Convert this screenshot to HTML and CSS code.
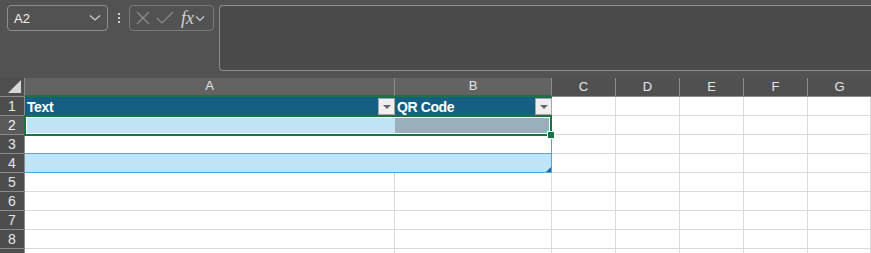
FILE: index.html
```html
<!DOCTYPE html>
<html lang="en">
<head>
    <meta charset="UTF-8">
    <title>Sheet</title>
    <link rel="stylesheet" href="styles.css">
</head>
<body>
    <div class="toolbar">
        <div class="namebox">
            <span>A2</span>
            <svg width="12" height="8" viewBox="0 0 12 8"><path d="M1 1.5 L6 6 L11 1.5" fill="none" stroke="#cfcfcf" stroke-width="1.2"/></svg>
        </div>
        <div class="grip"><i></i><i></i><i></i></div>
        <div class="controls">
            <svg width="16" height="16" viewBox="0 0 16 16"><path d="M2 2 L14 14 M14 2 L2 14" stroke="#8c8c8c" stroke-width="1.2"/></svg>
            <svg width="18" height="16" viewBox="0 0 18 16"><path d="M1 8 L6 13 L17 2" fill="none" stroke="#8c8c8c" stroke-width="1.2"/></svg>
            <span class="fx">fx</span>
            <svg width="10" height="7" viewBox="0 0 10 7"><path d="M1 1.5 L5 5.5 L9 1.5" fill="none" stroke="#cfcfcf" stroke-width="1.1"/></svg>
        </div>
        <div class="formula"></div>
    </div>

    <div class="sheet">
        <div class="corner"><svg width="13" height="13" viewBox="0 0 13 13"><path d="M13 0 L13 13 L0 13 Z" fill="#d6d6d6"/></svg></div>
        <div class="colhead sel">A</div>
        <div class="colhead sel">B</div>
        <div class="colhead">C</div>
        <div class="colhead">D</div>
        <div class="colhead">E</div>
        <div class="colhead">F</div>
        <div class="colhead last">G</div>

        <div class="rowhead">1</div>
        <div class="cell th">Text<span class="filter"></span></div>
        <div class="cell th">QR Code<span class="filter"></span></div>
        <div class="cell"></div><div class="cell"></div><div class="cell"></div><div class="cell"></div><div class="cell"></div>

        <div class="rowhead sel">2</div>
        <div class="cell band"></div>
        <div class="cell picked"></div>
        <div class="cell"></div><div class="cell"></div><div class="cell"></div><div class="cell"></div><div class="cell"></div>

        <div class="rowhead">3</div>
        <div class="cell white"></div>
        <div class="cell white edge"></div>
        <div class="cell"></div><div class="cell"></div><div class="cell"></div><div class="cell"></div><div class="cell"></div>

        <div class="rowhead">4</div>
        <div class="cell band last-row"></div>
        <div class="cell band last-row edge"><span class="resize"></span></div>
        <div class="cell"></div><div class="cell"></div><div class="cell"></div><div class="cell"></div><div class="cell"></div>

        <div class="rowhead">5</div>
        <div class="cell"></div><div class="cell"></div><div class="cell"></div><div class="cell"></div><div class="cell"></div><div class="cell"></div><div class="cell"></div>
        <div class="rowhead">6</div>
        <div class="cell"></div><div class="cell"></div><div class="cell"></div><div class="cell"></div><div class="cell"></div><div class="cell"></div><div class="cell"></div>
        <div class="rowhead">7</div>
        <div class="cell"></div><div class="cell"></div><div class="cell"></div><div class="cell"></div><div class="cell"></div><div class="cell"></div><div class="cell"></div>
        <div class="rowhead">8</div>
        <div class="cell"></div><div class="cell"></div><div class="cell"></div><div class="cell"></div><div class="cell"></div><div class="cell"></div><div class="cell"></div>
        <div class="rowhead"></div>
        <div class="cell"></div><div class="cell"></div><div class="cell"></div><div class="cell"></div><div class="cell"></div><div class="cell"></div><div class="cell"></div>

        <div class="selection"><span class="handle"></span></div>
    </div>
</body>
</html>
```

FILE: styles.css
```css
body {
    margin: 0;
    background: #525252;
    font-family: "Liberation Sans", Arial, sans-serif;
    overflow: hidden;
}
.toolbar {
    display: flex;
    align-items: flex-start;
    height: 78px;
    padding: 5px 0 0 7px;
    box-sizing: border-box;
}
.namebox {
    width: 101px;
    height: 26px;
    box-sizing: border-box;
    border: 1px solid #8e8e8e;
    border-radius: 4px;
    display: flex;
    align-items: center;
    justify-content: space-between;
    padding: 0 6px 0 6px;
    color: #f2f2f2;
    font-size: 13px;
}
.grip {
    width: 21px;
    height: 26px;
    display: flex;
    flex-direction: column;
    align-items: center;
    justify-content: center;
    gap: 2px;
}
.grip i {
    width: 2px;
    height: 2px;
    background: #d0d0d0;
}
.controls {
    width: 85px;
    height: 26px;
    box-sizing: border-box;
    border: 1px solid #7a7a7a;
    border-radius: 4px;
    display: flex;
    align-items: center;
    padding: 0 0 0 5px;
    gap: 5px;
}
.fx {
    font-family: "Liberation Serif", serif;
    font-style: italic;
    font-size: 18px;
    color: #d2d2d2;
    margin-left: 2px;
    margin-right: -4px;
}
.formula {
    flex: 1;
    height: 66px;
    margin-left: 5px;
    box-sizing: border-box;
    border: 1px solid #8e8e8e;
    border-right: none;
    border-radius: 4px 0 0 4px;
    background: #4b4b4b;
}
.sheet {
    position: relative;
    display: grid;
    grid-template-columns: 25px 370px 157px 64px 64px 64px 64px 63px;
    grid-auto-rows: 19px;
    background: #fff;
}
.corner {
    background: #4f4f4f;
    border-right: 1px solid #8a8a8a;
    border-bottom: 1px solid #8a8a8a;
    box-sizing: border-box;
    display: flex;
    align-items: flex-end;
    justify-content: flex-end;
    padding: 0 3px 3px 0;
}
.colhead {
    background: #505050;
    color: #e6e6e6;
    font-size: 13px;
    display: flex;
    align-items: center;
    justify-content: center;
    box-sizing: border-box;
    border-right: 1px solid #8c8c8c;
    border-bottom: 1px solid #8c8c8c;
    padding-bottom: 2px;
}
.colhead.sel {
    background: #636363;
    border-bottom: 2px solid #1e7145;
}
.colhead.last {
    border-right: none;
}
.rowhead {
    background: #4d4d4d;
    color: #e6e6e6;
    font-size: 14px;
    display: flex;
    align-items: center;
    justify-content: center;
    box-sizing: border-box;
    border-right: 1px solid #8c8c8c;
    border-bottom: 1px solid #8c8c8c;
}
.rowhead.sel {
    background: #5a5a5a;
    color: #f4f4f4;
}
.cell {
    box-sizing: border-box;
    border-right: 1px solid #dadada;
    border-bottom: 1px solid #dadada;
    background: #fff;
}
.cell.th {
    background: #155f82;
    border-right: none;
    border-bottom: none;
    color: #fff;
    font-weight: bold;
    font-size: 14px;
    letter-spacing: -0.4px;
    display: flex;
    align-items: center;
    padding-left: 2px;
    position: relative;
}
.filter {
    margin-left: auto;
    width: 17px;
    height: 17px;
    box-sizing: border-box;
    border: 1px solid #a6a6a6;
    background: #efefef;
    position: relative;
}
.filter::after {
    content: "";
    position: absolute;
    left: 4px;
    top: 6px;
    border-left: 4px solid transparent;
    border-right: 4px solid transparent;
    border-top: 4px solid #666;
}
.cell.band {
    background: #c0e4f5;
    border-right: none;
    border-bottom: none;
}
.cell.picked {
    background: #97b0bc;
    border-right: none;
    border-bottom: none;
}
.cell.white {
    border-right: none;
    border-bottom: 1px solid #4ea6dc;
}
.cell.edge {
    border-right: 1px solid #4ea6dc;
}
.cell.last-row {
    border-bottom: 1px solid #4ea6dc;
}
.cell.last-row.edge {
    position: relative;
}
.resize {
    position: absolute;
    right: 0;
    bottom: 0;
    border-left: 5px solid transparent;
    border-bottom: 5px solid #2f5fa8;
}
.selection {
    position: absolute;
    left: 24px;
    top: 37px;
    width: 528px;
    height: 21px;
    border: 2px solid #1e7145;
    box-shadow: inset 0 0 0 1px #fff;
    box-sizing: border-box;
}
.handle {
    position: absolute;
    right: -5px;
    bottom: -5px;
    width: 6px;
    height: 6px;
    background: #1e7145;
    border: 1px solid #fff;
}
```
